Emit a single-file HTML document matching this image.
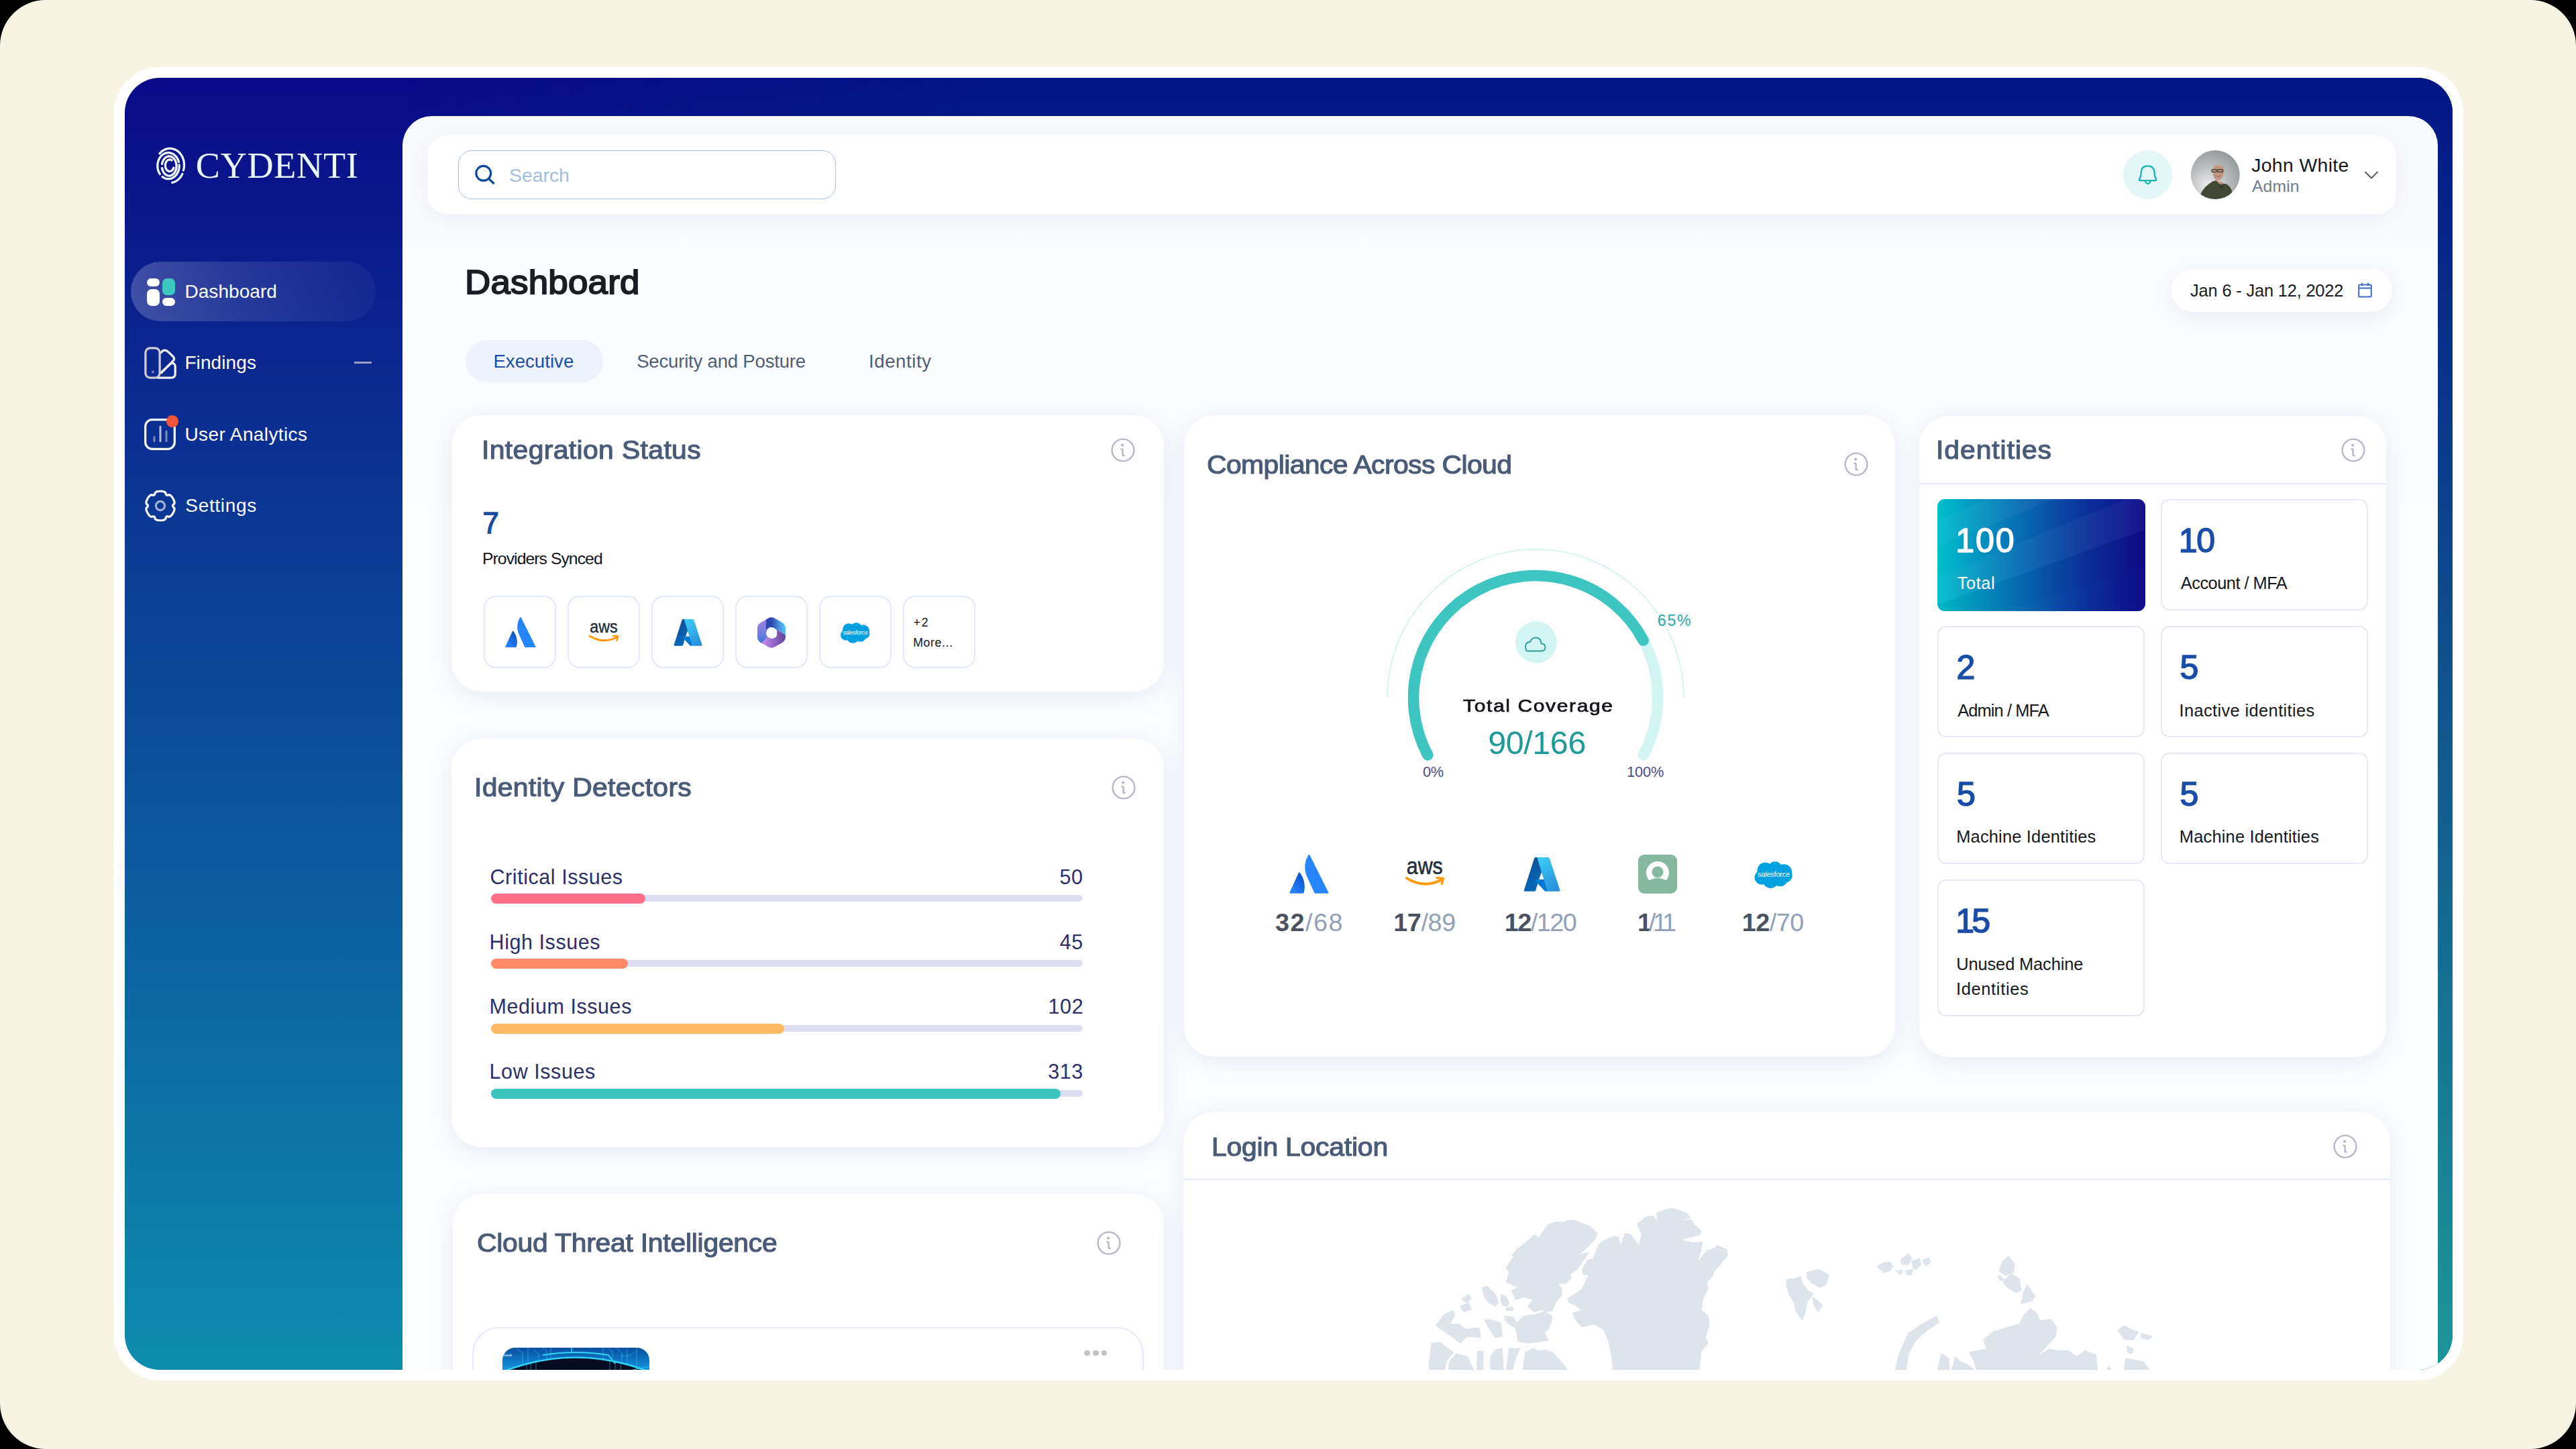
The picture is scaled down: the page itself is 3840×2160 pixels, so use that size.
<!DOCTYPE html><html><head><meta charset="utf-8"><title>Cydenti Dashboard</title><style>
html,body{margin:0;padding:0;width:3840px;height:2160px;overflow:hidden;background:#000}
*{box-sizing:border-box}
.a{position:absolute}
.t{position:absolute;white-space:nowrap;font-family:"Liberation Sans",sans-serif}
svg.a{overflow:visible}
</style></head><body>
<div class="a" style="left:0;top:0;width:3840px;height:2160px;border-radius:68px;background:#F7F4E3"></div>
<div class="a" style="left:170px;top:100px;width:3502px;height:1958px;border-radius:68px;background:#fff"></div>
<div class="a" style="left:186px;top:116px;width:3470px;height:1926px;border-radius:52px;overflow:hidden;background:linear-gradient(180deg,#0A0A88 0%,#0C4798 46%,#0D88AC 97%,#0E8CAC 100%)">
<div class="a" style="left:0;top:0;width:3470px;height:1926px;background:linear-gradient(180deg,#021586 0%,#10518E 46%,#167292 72%,#1B9398 97%,#1C9598 100%);-webkit-mask-image:linear-gradient(90deg,transparent 0px,transparent 420px,#000 1300px);mask-image:linear-gradient(90deg,transparent 0px,transparent 420px,#000 1300px)"></div>
<div class="a" style="left:-186px;top:-116px;width:3840px;height:2160px">
<svg class="a" style="left:226px;top:214px;" width="60" height="66" viewBox="0 0 60 66"><g fill="none" stroke="#EEF8FD" stroke-width="3.3" stroke-linecap="round" stroke-linejoin="round"><path d="M12.05 14.81 L13.08 13.65 L14.18 12.58 L15.33 11.60 L16.54 10.70 L17.80 9.91 L19.10 9.21 L20.44 8.62 L21.81 8.14 L23.21 7.76 L24.62 7.50 L26.05 7.34 L27.49 7.30 L28.92 7.37 L30.34 7.55 L31.75 7.85 L33.14 8.25 L34.51 8.77 L35.84 9.38 L37.13 10.10 L38.38 10.93 L39.57 11.84 L40.71 12.85 L41.79 13.95 L42.80 15.12 L43.75 16.38 L44.61 17.70 L45.40 19.09 L46.10 20.54 L46.72 22.04 L47.25 23.59 L47.69 25.17 L48.04 26.79 L48.29 28.42 L48.44 30.08 L48.50 31.74 L48.46 33.40 L48.32 35.06 L48.09 36.70 L47.77 38.32 L47.34 39.91 "/><path d="M12.41 45.47 L11.56 44.09 L10.82 42.62 L10.18 41.08 L9.66 39.48 L9.26 37.83 L8.99 36.15 L8.83 34.44 L8.80 32.72 L8.90 31.01 L9.13 29.31 L9.47 27.65 L9.94 26.02 L10.52 24.45 L11.22 22.95 L12.02 21.53 L12.92 20.20 L13.92 18.97 L15.00 17.85 L16.16 16.86 L17.39 15.98 L18.68 15.24 L20.02 14.64 L21.40 14.19 L22.80 13.88 L24.22 13.72 L25.65 13.72 L27.07 13.86 L28.48 14.15 L29.86 14.60 L31.20 15.18 L32.49 15.91 L33.73 16.77 L34.90 17.76 L35.99 18.87 L36.99 20.09 L37.90 21.41 L38.72 22.82 L39.42 24.32 L40.02 25.88 L40.49 27.50 "/><path d="M41.16 31.84 L41.20 32.92 L41.19 34.00 L41.12 35.08 L41.01 36.15 L40.85 37.21 L40.64 38.26 L40.39 39.30 L40.08 40.32 L39.73 41.31 L39.34 42.28 L38.90 43.22 L38.41 44.13 L37.89 45.01 L37.33 45.85 L36.73 46.65 L36.09 47.41 L35.42 48.13 L34.72 48.80 L33.98 49.43 L33.22 50.00 L32.44 50.52 L31.63 50.99 L30.80 51.41 L29.95 51.77 L29.09 52.07 L28.22 52.31 L27.33 52.50 L26.44 52.62 L25.54 52.69 L24.65 52.70 L23.75 52.64 L22.86 52.53 L21.97 52.36 L21.09 52.12 L20.23 51.84 L19.38 51.49 L18.55 51.09 L17.73 50.63 L16.94 50.12 L16.18 49.55 "/><path d="M45.92 45.25 L45.68 45.76 L45.42 46.26 L45.16 46.75 L44.89 47.24 L44.61 47.72 L44.32 48.19 L44.03 48.65 L43.72 49.10 L43.41 49.55 L43.09 49.99 L42.76 50.42 L42.42 50.84 L42.08 51.25 L41.73 51.65 L41.37 52.04 L41.00 52.42 L40.63 52.79 L40.25 53.15 L39.87 53.50 L39.48 53.84 L39.08 54.17 L38.68 54.49 L38.27 54.79 L37.85 55.09 L37.44 55.37 L37.01 55.64 L36.58 55.90 L36.15 56.15 L35.71 56.39 L35.27 56.61 L34.82 56.83 L34.37 57.03 L33.92 57.21 L33.46 57.39 L33.00 57.55 L32.54 57.70 L32.07 57.84 L31.60 57.96 L31.14 58.08 L30.66 58.17 "/><path d="M15.54 30.46 L15.98 28.41 L16.65 26.47 L17.52 24.67 L18.57 23.07 L19.79 21.69 L21.15 20.56 L22.62 19.71 L24.16 19.16 L25.74 18.91 L27.34 18.98 L28.91 19.36 L30.42 20.04 L31.85 21.01 L33.15 22.25 L34.30 23.73 L35.28 25.42 L36.06 27.28 L36.63 29.28 L36.98 31.37 L37.10 33.50 L36.98 35.63 L36.63 37.72 L36.06 39.72 L35.28 41.58 L34.30 43.27 L33.15 44.75 L31.85 45.99 L30.42 46.96 L28.91 47.64 L27.34 48.02 L25.74 48.09 L24.16 47.84 L22.62 47.29 L21.15 46.44 L19.79 45.31 L18.57 43.93 L17.52 42.33 L16.65 40.53 L15.98 38.59 L15.54 36.54 "/><path d="M32.88 36.14 L32.54 37.08 L32.11 37.97 L31.61 38.77 L31.03 39.49 L30.40 40.11 L29.72 40.63 L29.00 41.03 L28.25 41.31 L27.48 41.46 L26.70 41.50 L25.93 41.40 L25.16 41.18 L24.43 40.84 L23.72 40.38 L23.07 39.81 L22.47 39.14 L21.93 38.37 L21.46 37.52 L21.08 36.61 L20.77 35.64 L20.56 34.62 L20.43 33.58 L20.40 32.53 L20.46 31.48 L20.62 30.44 L20.86 29.44 L21.19 28.48 L21.61 27.59 L22.10 26.77 L22.66 26.03 L23.28 25.39 L23.95 24.86 L24.66 24.44 L25.41 24.13 L26.18 23.95 L26.96 23.90 L27.73 23.97 L28.50 24.17 L29.24 24.49 L29.95 24.93 "/></g></svg>
<div class="t" style="left:291.8px;top:220.2px;font-size:54.20px;line-height:54.20px;font-family:'Liberation Serif',serif;font-weight:400;color:#EAF6FC;letter-spacing:0.69px;">CYDENTI</div>
<div class="a" style="left:195px;top:390px;width:365px;height:89px;border-radius:44.5px;background:linear-gradient(90deg,rgba(255,255,255,0.21) 0%,rgba(255,255,255,0.11) 45%,rgba(255,255,255,0.035) 100%)"></div>
<div class="a" style="left:219px;top:415px;width:19px;height:12px;border-radius:6px;background:#fff"></div>
<div class="a" style="left:242px;top:415px;width:19px;height:25px;border-radius:7px;background:#3EC6C0"></div>
<div class="a" style="left:219px;top:431px;width:19px;height:25px;border-radius:7px;background:#fff"></div>
<div class="a" style="left:242px;top:444px;width:19px;height:12px;border-radius:6px;background:#fff"></div>
<div class="t" style="left:275.4px;top:421.0px;font-size:28.05px;line-height:28.05px;font-family:'Liberation Sans',sans-serif;font-weight:400;color:#fff;letter-spacing:0.04px;">Dashboard</div>
<svg class="a" style="left:215px;top:517px;" width="49" height="49" viewBox="0 0 49 49"><g fill="none" stroke-width="3.3" stroke-linejoin="round" stroke-linecap="round"><path d="M25.4 8.5 Q27 5.2 31 5.2 Q33.5 5.3 35.5 7.3 L43 14.5 Q46 17.7 43.3 20.7 L25.6 38.6" stroke="#EDEDF0"/><path d="M25 38.5 L38.8 25.7 Q42 23 44.8 25.6 Q46.2 27 46.2 29.5 V40 Q46.2 46.1 40 46.1 H20" stroke="#EDEDF0"/><rect x="1.9" y="1.9" width="21.2" height="44.2" rx="6.8" stroke="#CDCCD2"/></g><circle cx="12.8" cy="37.4" r="2.1" fill="#6F74B8"/></svg>
<div class="t" style="left:275.4px;top:527.2px;font-size:28.05px;line-height:28.05px;font-family:'Liberation Sans',sans-serif;font-weight:400;color:#fff;letter-spacing:0.08px;">Findings</div>
<div class="a" style="left:528px;top:539px;width:26px;height:2.5px;background:#9B9DC4"></div>
<svg class="a" style="left:215px;top:624px;" width="47" height="47" viewBox="0 0 47 47"><rect x="1.7" y="1.7" width="43.6" height="43.6" rx="10" fill="none" stroke="#fff" stroke-width="3.2"/><rect x="13.5" y="26" width="3" height="9" rx="1.5" fill="rgba(255,255,255,0.45)"/><rect x="22.5" y="10.5" width="3" height="24.5" rx="1.5" fill="rgba(255,255,255,0.7)"/><rect x="31.5" y="17.5" width="3" height="17.5" rx="1.5" fill="rgba(255,255,255,0.45)"/></svg>
<div class="a" style="left:248px;top:619px;width:17.6px;height:17.6px;border-radius:50%;background:#F2553A"></div>
<div class="t" style="left:275.5px;top:633.7px;font-size:28.05px;line-height:28.05px;font-family:'Liberation Sans',sans-serif;font-weight:400;color:#fff;letter-spacing:0.37px;">User Analytics</div>
<svg class="a" style="left:211px;top:726px;" width="56" height="56" viewBox="0 0 56 56"><path d="M29.87 6.25 L26.13 6.25 L23.25 6.68 L21.24 7.54 L20.09 8.82 L19.82 10.54 L19.20 11.67 L18.25 12.21 L16.97 12.18 L15.34 11.57 L13.66 11.91 L11.91 13.23 L10.10 15.51 L8.23 18.75 L7.16 21.45 L6.90 23.62 L7.44 25.26 L8.78 26.35 L9.46 27.45 L9.46 28.55 L8.78 29.65 L7.44 30.74 L6.90 32.38 L7.16 34.55 L8.23 37.25 L10.10 40.49 L11.91 42.77 L13.66 44.09 L15.34 44.43 L16.97 43.82 L18.25 43.79 L19.20 44.33 L19.82 45.46 L20.09 47.18 L21.24 48.46 L23.25 49.32 L26.13 49.75 L29.87 49.75 L32.75 49.32 L34.76 48.46 L35.91 47.18 L36.18 45.46 L36.80 44.33 L37.75 43.79 L39.03 43.82 L40.66 44.43 L42.34 44.09 L44.09 42.77 L45.90 40.49 L47.77 37.25 L48.84 34.55 L49.10 32.38 L48.56 30.74 L47.22 29.65 L46.54 28.55 L46.54 27.45 L47.22 26.35 L48.56 25.26 L49.10 23.62 L48.84 21.45 L47.77 18.75 L45.90 15.51 L44.09 13.23 L42.34 11.91 L40.66 11.57 L39.03 12.18 L37.75 12.21 L36.80 11.67 L36.18 10.54 L35.91 8.82 L34.76 7.54 L32.75 6.68Z" fill="none" stroke="#fff" stroke-width="3.2" stroke-linejoin="round"/><circle cx="28" cy="28" r="6.6" fill="none" stroke="rgba(255,255,255,0.62)" stroke-width="3.1"/></svg>
<div class="t" style="left:276.3px;top:740.2px;font-size:28.05px;line-height:28.05px;font-family:'Liberation Sans',sans-serif;font-weight:400;color:#fff;letter-spacing:0.65px;">Settings</div>
<div class="a" style="left:600px;top:173px;width:3034px;height:1900px;border-radius:44px 44px 0 0;background:linear-gradient(180deg,#F8F9FC 0px,#FBFCFE 300px,#FCFDFF 700px)"></div>
<div class="a" style="left:637px;top:202px;width:2935px;height:117px;border-radius:29px;background:#fff;box-shadow:0 8px 30px rgba(50,90,180,0.065)"></div>
<div class="a" style="left:683px;top:224px;width:563px;height:73px;border-radius:20px;border:1.6px solid #A9C0E2;background:#fff"></div>
<svg class="a" style="left:708px;top:246px;" width="31" height="31" viewBox="0 0 31 31"><circle cx="12.7" cy="12.3" r="10.9" fill="none" stroke="#0E4AA0" stroke-width="3.2"/><path d="M20.5 20.3 L28.6 28" stroke="#0E4AA0" stroke-width="3.2" stroke-linecap="butt"/></svg>
<div class="t" style="left:759.1px;top:246.6px;font-size:28.49px;line-height:28.49px;font-family:'Liberation Sans',sans-serif;font-weight:400;color:#A3BDE0;letter-spacing:-0.09px;">Search</div>
<div class="a" style="left:3165px;top:224px;width:73px;height:73px;border-radius:50%;background:#E4F6F7"></div>
<svg class="a" style="left:3185px;top:244px;" width="33" height="32" viewBox="0 0 33 32"><path d="M5 25.2 Q3.2 25 4.4 22.6 Q6.6 18.5 6.6 14.5 Q6.6 3.3 16.6 3.3 Q26.6 3.3 26.6 14.5 Q26.6 18.5 28.8 22.6 Q30 25 28.2 25.2 Z" fill="none" stroke="#18B3B5" stroke-width="2.3" stroke-linejoin="round"/><path d="M12.6 25.6 Q13.6 29.8 16.6 29.8 Q19.6 29.8 20.6 25.6" fill="none" stroke="#18B3B5" stroke-width="2.2"/></svg>
<svg class="a" style="left:3266px;top:224px;" width="73" height="73" viewBox="0 0 73 73"><defs><radialGradient id="avg" cx="0.35" cy="0.72" r="0.75"><stop offset="0" stop-color="#EDEDEE"/><stop offset="0.55" stop-color="#B9BCBE"/><stop offset="1" stop-color="#959A9C"/></radialGradient><clipPath id="avc"><circle cx="36.3" cy="36.5" r="36.4"/></clipPath></defs><g clip-path="url(#avc)"><rect width="73" height="73" fill="url(#avg)"/><path d="M35 44 L49 49 L47 58 Z" fill="#B98A73"/><ellipse cx="40.6" cy="32.5" rx="8.3" ry="12.4" fill="#C39680"/><path d="M32.3 30 Q31.5 19.5 40.5 19.2 Q49.5 19.5 49.3 30 Q48 24 46 23.5 Q40 21.5 34.5 24 Q33 26 32.3 30Z" fill="#B4B3AC"/><rect x="31" y="28.6" width="7.8" height="3.8" rx="1.4" fill="none" stroke="#3B3632" stroke-width="1.3"/><rect x="40" y="28.6" width="7.8" height="3.8" rx="1.4" fill="none" stroke="#3B3632" stroke-width="1.3"/><path d="M36 38 Q40.5 41 45 38" fill="none" stroke="#8C6A5A" stroke-width="1"/><path d="M14 66 Q19 54 33 46 L37 45.5 Q42 53 48.5 50 L52 50 Q58.5 53 60.8 60 L61.5 76 H12 Z" fill="#414934"/><path d="M37 45.5 L46 57 L49 50.5" fill="none" stroke="#2E3426" stroke-width="1.2"/></g></svg>
<div class="t" style="left:3356.2px;top:232.1px;font-size:28.34px;line-height:28.34px;font-family:'Liberation Sans',sans-serif;font-weight:400;color:#15171C;letter-spacing:0.38px;">John White</div>
<div class="t" style="left:3357.0px;top:266.0px;font-size:24.71px;line-height:24.71px;font-family:'Liberation Sans',sans-serif;font-weight:400;color:#6E7C8A;letter-spacing:0.14px;">Admin</div>
<svg class="a" style="left:3524px;top:254px;" width="22" height="14" viewBox="0 0 22 14"><path d="M1.5 2 L11 11.5 L20.5 2" fill="none" stroke="#555B63" stroke-width="2"/></svg>
<div class="t" style="left:692.5px;top:396.0px;font-size:50.00px;line-height:50.00px;font-family:'Liberation Sans',sans-serif;font-weight:400;color:#1A1D24;letter-spacing:0.14px;-webkit-text-stroke:1.9px #1A1D24;transform:scaleX(1.06);transform-origin:0 0;">Dashboard</div>
<div class="a" style="left:3237px;top:401px;width:329px;height:64px;border-radius:32px;background:#fff;box-shadow:0 8px 30px rgba(50,90,180,0.09)"></div>
<div class="t" style="left:3265.1px;top:420.5px;font-size:25.44px;line-height:25.44px;font-family:'Liberation Sans',sans-serif;font-weight:400;color:#1A1D24;letter-spacing:-0.19px;">Jan 6 - Jan 12, 2022</div>
<svg class="a" style="left:3515px;top:421px;" width="21" height="23" viewBox="0 0 21 23"><rect x="1.2" y="3.5" width="18.6" height="18" rx="1.5" fill="none" stroke="#3A6CC8" stroke-width="2"/><path d="M1.2 8.5 H19.8 M6 0.8 V5 M15 0.8 V5" stroke="#3A6CC8" stroke-width="2"/></svg>
<div class="a" style="left:693.5px;top:507px;width:205.5px;height:63px;border-radius:32px;background:#EDF2FC"></div>
<div class="t" style="left:735.4px;top:524.6px;font-size:27.62px;line-height:27.62px;font-family:'Liberation Sans',sans-serif;font-weight:400;color:#1F4FA8;letter-spacing:0.02px;">Executive</div>
<div class="t" style="left:949.2px;top:524.6px;font-size:27.62px;line-height:27.62px;font-family:'Liberation Sans',sans-serif;font-weight:400;color:#4F5E78;letter-spacing:-0.23px;">Security and Posture</div>
<div class="t" style="left:1295.1px;top:524.6px;font-size:27.62px;line-height:27.62px;font-family:'Liberation Sans',sans-serif;font-weight:400;color:#4F5E78;letter-spacing:0.55px;">Identity</div>
<div class="a" style="left:673px;top:619px;width:1062px;height:412px;border-radius:45px;background:#fff;box-shadow:0 6px 36px rgba(60,95,165,0.12)"></div>
<div class="t" style="left:717.9px;top:651.8px;font-size:38.59px;line-height:38.59px;font-family:'Liberation Sans',sans-serif;font-weight:400;color:#4A5B78;letter-spacing:0.34px;-webkit-text-stroke:1.15px #4A5B78;transform:scaleX(1.06);transform-origin:0 0;">Integration Status</div>
<svg class="a" style="left:1654.4px;top:650.7px;" width="40" height="40" viewBox="0 0 40 40"><circle cx="20" cy="20" r="16.4" fill="none" stroke="#B6BAC8" stroke-width="2.4"/><circle cx="19.1" cy="12.6" r="2.1" fill="#B6BAC8"/><path d="M17.6 18.6 Q19.6 18.6 19.6 20.5 V26.5 Q19.6 28.2 21.6 28.2" fill="none" stroke="#B6BAC8" stroke-width="2.5" stroke-linecap="round"/></svg>
<div class="t" style="left:719.5px;top:758.0px;font-size:43.75px;line-height:43.75px;font-family:'Liberation Sans',sans-serif;font-weight:400;color:#1A4DA0;letter-spacing:0.00px;-webkit-text-stroke:1.4px #1A4DA0;">7</div>
<div class="t" style="left:719.0px;top:821.1px;font-size:24.71px;line-height:24.71px;font-family:'Liberation Sans',sans-serif;font-weight:400;color:#111318;letter-spacing:-0.93px;">Providers Synced</div>
<div class="a" style="left:721px;top:888px;width:108px;height:108px;border-radius:18px;border:2px solid #E4E9FC;background:#fff"></div>
<div class="a" style="left:846px;top:888px;width:108px;height:108px;border-radius:18px;border:2px solid #E4E9FC;background:#fff"></div>
<div class="a" style="left:971px;top:888px;width:108px;height:108px;border-radius:18px;border:2px solid #E4E9FC;background:#fff"></div>
<div class="a" style="left:1096px;top:888px;width:108px;height:108px;border-radius:18px;border:2px solid #E4E9FC;background:#fff"></div>
<div class="a" style="left:1221px;top:888px;width:108px;height:108px;border-radius:18px;border:2px solid #E4E9FC;background:#fff"></div>
<div class="a" style="left:1346px;top:888px;width:108px;height:108px;border-radius:18px;border:2px solid #E4E9FC;background:#fff"></div>
<svg class="a" style="left:752.6px;top:919.8px;" width="46" height="46" viewBox="0 0 45 45"><defs><linearGradient id="atg752.6" x1="0.9" y1="0.1" x2="0.2" y2="0.9"><stop offset="0" stop-color="#0A4FC2"/><stop offset="1" stop-color="#2684FF"/></linearGradient></defs><path d="M12.3 20.7 Q11.3 19.5 10.5 20.8 L0.3 43 Q-0.2 44 1 44 H15.3 Q16.2 44 16.6 43 Q19.6 31 12.3 20.7Z" fill="url(#atg752.6)"/><path d="M21.5 0.6 Q15.5 11 19 22.5 L28.3 43 Q28.8 44 29.8 44 H44 Q45 44 44.5 43 L23.3 0.6 Q22.4 -0.6 21.5 0.6Z" fill="#2684FF"/></svg>
<svg class="a" style="left:878px;top:928px;" width="45" height="31" viewBox="0 0 44 30"><text x="1.2" y="14.7" font-family="Liberation Sans,sans-serif" font-size="26" fill="#232F3E" stroke="#232F3E" stroke-width="0.45" textLength="40.5" lengthAdjust="spacingAndGlyphs">aws</text><path d="M1.2 19.6 Q21 31.5 40.2 21.4" fill="none" stroke="#FF9900" stroke-width="2.9" stroke-linecap="round"/><path d="M35.2 19.2 L42.2 19.9 L40.6 26" fill="none" stroke="#FF9900" stroke-width="2.5" stroke-linecap="round" stroke-linejoin="round"/></svg>
<svg class="a" style="left:1004px;top:922.8px;" width="43" height="40" viewBox="0 0 42 39"><defs><linearGradient id="azA1004" x1="0" y1="0" x2="0.3" y2="1"><stop offset="0" stop-color="#114A8B"/><stop offset="1" stop-color="#0669BC"/></linearGradient><linearGradient id="azB1004" x1="0.2" y1="0" x2="0.6" y2="1"><stop offset="0" stop-color="#3CCBF4"/><stop offset="1" stop-color="#2892DF"/></linearGradient></defs><path d="M13.6 0 H16.6 L21.2 15.2 L17.8 24.6 L13.9 37.6 Q13.5 38.8 12.3 38.8 H1.6 Q0.2 38.8 0.6 37.5 L12.4 1 Q12.7 0 13.6 0Z" fill="url(#azA1004)"/><path d="M11.8 25.2 H24.2 L27.4 38.8 H25.4 Q24.6 38.8 24 38.2 Z" fill="#0078D4"/><path d="M15.4 0 H28.2 Q29.2 0 29.6 1 L41.6 37.5 Q42 38.8 40.6 38.8 H28.3 Q27.3 38.8 27 37.8 Z" fill="url(#azB1004)"/></svg>
<svg class="a" style="left:1129.4px;top:920px;" width="42" height="46" viewBox="0 0 40.5 44.8"><defs><clipPath id="mcl1129"><path d="M15.34 1.63 L15.34 1.63 Q20.25 -1.20 25.16 1.63 L35.78 7.77 Q40.69 10.60 40.69 16.26 L40.69 28.54 Q40.69 34.20 35.78 37.03 L25.16 43.17 Q20.25 46.00 15.34 43.17 L4.72 37.03 Q-0.19 34.20 -0.19 28.54 L-0.19 16.26 Q-0.19 10.60 4.72 7.77 Z"/></clipPath><linearGradient id="mL1129" x1="0" y1="0" x2="0" y2="1"><stop offset="0" stop-color="#B27DE4"/><stop offset="0.5" stop-color="#6E7FE0"/><stop offset="1" stop-color="#1668CE"/></linearGradient><linearGradient id="mT1129" x1="0" y1="0" x2="1" y2="0"><stop offset="0.25" stop-color="#2E48AE"/><stop offset="0.55" stop-color="#4A90DD"/><stop offset="1" stop-color="#52E6FA"/></linearGradient><linearGradient id="mB1129" x1="0" y1="0" x2="1" y2="0"><stop offset="0.1" stop-color="#D89BF5"/><stop offset="0.55" stop-color="#9466C8"/><stop offset="1" stop-color="#4E3888"/></linearGradient></defs><g clip-path="url(#mcl1129)"><path d="M20.25 22.4 L-4.5 49.8 L-5 -3 L12 -3 L12 26Z" fill="url(#mL1129)"/><path d="M12 26 L12 -3 L46 -3 L46 29.5 L28.8 18.2 L20.25 22.4Z" fill="url(#mT1129)"/><path d="M20.25 22.4 L28.8 18.2 L46 29.5 L46 51 L-4.5 51 L-4.5 49.8Z" fill="url(#mB1129)"/></g><path d="M12.65 23.4 Q12.25 17.4 17.25 15.099999999999998 Q20.25 13.799999999999999 23.75 15.599999999999998 L27.05 17.799999999999997 Q28.25 18.9 28.25 21.4 V25.4 Q28.05 28.9 24.75 30.2 Q20.25 32.0 16.25 29.7 Q12.65 27.4 12.65 23.4Z" fill="#fff"/></svg>
<svg class="a" style="left:1252px;top:927px;" width="46" height="32" viewBox="0 0 45 31"><g fill="#00A1E0"><circle cx="13" cy="11" r="9"/><circle cx="24" cy="9" r="8"/><circle cx="34" cy="13" r="9"/><circle cx="9" cy="19" r="8"/><circle cx="19" cy="22" r="9"/><circle cx="30" cy="21" r="8"/><circle cx="36" cy="17" r="7.5"/></g><text x="22.5" y="18.5" text-anchor="middle" font-family="Liberation Sans,sans-serif" font-size="8.4" fill="#fff" letter-spacing="-0.2">salesforce</text></svg>
<div class="t" style="left:1361.7px;top:920.0px;font-size:17.59px;line-height:17.59px;font-family:'Liberation Sans',sans-serif;font-weight:400;color:#111318;letter-spacing:1.91px;">+2</div>
<div class="t" style="left:1361.2px;top:949.8px;font-size:17.73px;line-height:17.73px;font-family:'Liberation Sans',sans-serif;font-weight:400;color:#111318;letter-spacing:0.63px;">More...</div>
<div class="a" style="left:673px;top:1101px;width:1062px;height:609px;border-radius:45px;background:#fff;box-shadow:0 6px 36px rgba(60,95,165,0.12)"></div>
<div class="t" style="left:706.9px;top:1154.6px;font-size:38.59px;line-height:38.59px;font-family:'Liberation Sans',sans-serif;font-weight:400;color:#4A5B78;letter-spacing:0.31px;-webkit-text-stroke:1.15px #4A5B78;transform:scaleX(1.06);transform-origin:0 0;">Identity Detectors</div>
<svg class="a" style="left:1655px;top:1153.6px;" width="40" height="40" viewBox="0 0 40 40"><circle cx="20" cy="20" r="16.4" fill="none" stroke="#B6BAC8" stroke-width="2.4"/><circle cx="19.1" cy="12.6" r="2.1" fill="#B6BAC8"/><path d="M17.6 18.6 Q19.6 18.6 19.6 20.5 V26.5 Q19.6 28.2 21.6 28.2" fill="none" stroke="#B6BAC8" stroke-width="2.5" stroke-linecap="round"/></svg>
<div class="t" style="left:730.5px;top:1291.8px;font-size:30.52px;line-height:30.52px;font-family:'Liberation Sans',sans-serif;font-weight:400;color:#2C2F6A;letter-spacing:0.55px;">Critical Issues</div>
<div class="t" style="left:1579.6px;top:1291.8px;font-size:30.52px;line-height:30.52px;font-family:'Liberation Sans',sans-serif;font-weight:400;color:#2C2F6A;letter-spacing:0.55px;">50</div>
<div class="a" style="left:732px;top:1334px;width:882px;height:10px;border-radius:5px;background:#DDDEF1"></div>
<div class="a" style="left:732px;top:1331.5px;width:229.70000000000005px;height:15px;border-radius:7.5px;background:#FF6F8A"></div>
<div class="t" style="left:729.6px;top:1389.0px;font-size:30.52px;line-height:30.52px;font-family:'Liberation Sans',sans-serif;font-weight:400;color:#2C2F6A;letter-spacing:0.55px;">High Issues</div>
<div class="t" style="left:1579.8px;top:1389.0px;font-size:30.52px;line-height:30.52px;font-family:'Liberation Sans',sans-serif;font-weight:400;color:#2C2F6A;letter-spacing:0.55px;">45</div>
<div class="a" style="left:732px;top:1431px;width:882px;height:10px;border-radius:5px;background:#DDDEF1"></div>
<div class="a" style="left:732px;top:1428.5px;width:204px;height:15px;border-radius:7.5px;background:#FF8B6A"></div>
<div class="t" style="left:729.6px;top:1484.9px;font-size:30.52px;line-height:30.52px;font-family:'Liberation Sans',sans-serif;font-weight:400;color:#2C2F6A;letter-spacing:0.55px;">Medium Issues</div>
<div class="t" style="left:1562.6px;top:1484.9px;font-size:30.52px;line-height:30.52px;font-family:'Liberation Sans',sans-serif;font-weight:400;color:#2C2F6A;letter-spacing:0.55px;">102</div>
<div class="a" style="left:732px;top:1528px;width:882px;height:10px;border-radius:5px;background:#DDDEF1"></div>
<div class="a" style="left:732px;top:1525.5px;width:437px;height:15px;border-radius:7.5px;background:#FFB864"></div>
<div class="t" style="left:729.6px;top:1582.0px;font-size:30.52px;line-height:30.52px;font-family:'Liberation Sans',sans-serif;font-weight:400;color:#2C2F6A;letter-spacing:0.55px;">Low Issues</div>
<div class="t" style="left:1562.3px;top:1582.0px;font-size:30.52px;line-height:30.52px;font-family:'Liberation Sans',sans-serif;font-weight:400;color:#2C2F6A;letter-spacing:0.55px;">313</div>
<div class="a" style="left:732px;top:1625px;width:882px;height:10px;border-radius:5px;background:#DDDEF1"></div>
<div class="a" style="left:732px;top:1622.5px;width:849px;height:15px;border-radius:7.5px;background:#3CC5BF"></div>
<div class="a" style="left:675px;top:1780px;width:1060px;height:500px;border-radius:45px;background:#fff;box-shadow:0 6px 36px rgba(60,95,165,0.12)"></div>
<div class="t" style="left:710.6px;top:1834.1px;font-size:38.59px;line-height:38.59px;font-family:'Liberation Sans',sans-serif;font-weight:400;color:#4A5B78;letter-spacing:-0.24px;-webkit-text-stroke:1.15px #4A5B78;transform:scaleX(1.06);transform-origin:0 0;">Cloud Threat Intelligence</div>
<svg class="a" style="left:1632.7px;top:1833px;" width="40" height="40" viewBox="0 0 40 40"><circle cx="20" cy="20" r="16.4" fill="none" stroke="#B6BAC8" stroke-width="2.4"/><circle cx="19.1" cy="12.6" r="2.1" fill="#B6BAC8"/><path d="M17.6 18.6 Q19.6 18.6 19.6 20.5 V26.5 Q19.6 28.2 21.6 28.2" fill="none" stroke="#B6BAC8" stroke-width="2.5" stroke-linecap="round"/></svg>
<div class="a" style="left:704px;top:1977.5px;width:1001px;height:200px;border-radius:40px;border:2px solid #E6EAFB;background:#fff"></div>
<div class="a" style="left:749px;top:2009.3px;width:219px;height:40px;border-radius:18.6px 18.6px 0 0;overflow:hidden"><svg class="a" style="left:0px;top:0px;" width="219" height="40" viewBox="0 0 219 40"><defs><linearGradient id="thg" x1="0" y1="0" x2="0" y2="1"><stop offset="0" stop-color="#0A4E9E"/><stop offset="0.5" stop-color="#0F78C8"/><stop offset="1" stop-color="#18A6E2"/></linearGradient></defs><rect width="219" height="40" fill="url(#thg)"/><g stroke="#3CCBF2" stroke-width="0.9" opacity="0.6" fill="none"><path d="M20 0 L30 8 V40 M38 0 V40 M46 2 L54 10 V30 M60 0 L66 6 V40 M72 0 V40 M150 0 V40 M158 0 L164 6 V40 M170 0 L178 8 V40 M186 0 V40 M200 0 V40 M176 12 H190 L196 6"/></g><path d="M0 36 Q109 -7 219 36 V40 H0Z" fill="#020B20"/><g stroke="#3CCBF2" stroke-width="0.8" opacity="0.7" fill="none"><path d="M36 40 V22 M42 40 V20 M50 40 V18 M160 40 V20 M168 40 V22 M176 40 V24"/></g><path d="M0 36 Q109 -7 219 36" fill="none" stroke="#2ED3F6" stroke-width="2.6"/><path d="M60 11 Q109 3 158 11 L168 24" fill="none" stroke="#2ED3F6" stroke-width="1.8"/><path d="M103 0 V7.5" stroke="#2ED3F6" stroke-width="1.5"/><path d="M180 36 L219 28" stroke="#2ED3F6" stroke-width="1.2" opacity="0.8"/><text x="1" y="13" font-family="Liberation Sans,sans-serif" font-size="5.5" fill="#fff">Geek</text></svg></div>
<div class="a" style="left:1616.3999999999999px;top:2012.8px;width:8.4px;height:8.4px;border-radius:50%;background:#C4C4C8"></div>
<div class="a" style="left:1629.3px;top:2012.8px;width:8.4px;height:8.4px;border-radius:50%;background:#C4C4C8"></div>
<div class="a" style="left:1641.8px;top:2012.8px;width:8.4px;height:8.4px;border-radius:50%;background:#C4C4C8"></div>
<div class="a" style="left:1765px;top:619px;width:1060px;height:956px;border-radius:45px;background:#fff;box-shadow:0 6px 36px rgba(60,95,165,0.12)"></div>
<div class="t" style="left:1798.6px;top:674.3px;font-size:38.59px;line-height:38.59px;font-family:'Liberation Sans',sans-serif;font-weight:400;color:#4A5B78;letter-spacing:-0.57px;-webkit-text-stroke:1.15px #4A5B78;transform:scaleX(1.06);transform-origin:0 0;">Compliance Across Cloud</div>
<svg class="a" style="left:2746.6px;top:671.8px;" width="40" height="40" viewBox="0 0 40 40"><circle cx="20" cy="20" r="16.4" fill="none" stroke="#B6BAC8" stroke-width="2.4"/><circle cx="19.1" cy="12.6" r="2.1" fill="#B6BAC8"/><path d="M17.6 18.6 Q19.6 18.6 19.6 20.5 V26.5 Q19.6 28.2 21.6 28.2" fill="none" stroke="#B6BAC8" stroke-width="2.5" stroke-linecap="round"/></svg>
<svg class="a" style="left:2040px;top:800px;" width="500" height="320" viewBox="0 0 500 320"><path d="M28.00 240.00 A221 221 0 0 1 470.00 240.00" fill="none" stroke="#CFF3F1" stroke-width="1.6"/><path d="M88.30 325.44 A182 182 0 1 1 409.70 325.44" fill="none" stroke="#D2F5F3" stroke-width="16.5" stroke-linecap="round"/><path d="M88.30 325.44 A182 182 0 0 1 409.70 154.56" fill="none" stroke="#3EC5C1" stroke-width="16.5" stroke-linecap="round"/><circle cx="249.9" cy="157.3" r="31" fill="#D3F5F3"/><path d="M237.5 170.5 H258 Q263.5 170.5 263.5 165 Q263.5 159.5 257.5 159.5 Q257 150.5 249 150.5 Q243 150.5 241 157 Q234 157 234 164 Q234 170.5 237.5 170.5Z" fill="none" stroke="#2A9E9C" stroke-width="1.8" stroke-linejoin="round"/></svg>
<div class="t" style="left:2180.6px;top:1039.2px;font-size:26.60px;line-height:26.60px;font-family:'Liberation Sans',sans-serif;font-weight:400;color:#111318;letter-spacing:1.42px;-webkit-text-stroke:0.7px #111318;transform:scaleX(1.13);transform-origin:0 0;">Total Coverage</div>
<div class="t" style="left:2218.2px;top:1082.8px;font-size:48.40px;line-height:48.40px;font-family:'Liberation Sans',sans-serif;font-weight:400;color:#1E9A98;letter-spacing:-0.38px;">90/166</div>
<div class="t" style="left:2120.9px;top:1140.2px;font-size:21.80px;line-height:21.80px;font-family:'Liberation Sans',sans-serif;font-weight:400;color:#4A4C88;letter-spacing:-0.27px;">0%</div>
<div class="t" style="left:2425.1px;top:1140.2px;font-size:21.80px;line-height:21.80px;font-family:'Liberation Sans',sans-serif;font-weight:400;color:#4A4C88;letter-spacing:-0.14px;">100%</div>
<div class="t" style="left:2470.8px;top:914.0px;font-size:23.26px;line-height:23.26px;font-family:'Liberation Sans',sans-serif;font-weight:400;color:#2BA8A6;letter-spacing:1.73px;">65%</div>
<svg class="a" style="left:1921.7px;top:1273.5px;" width="59" height="59" viewBox="0 0 45 45"><defs><linearGradient id="atg1921.7" x1="0.9" y1="0.1" x2="0.2" y2="0.9"><stop offset="0" stop-color="#0A4FC2"/><stop offset="1" stop-color="#2684FF"/></linearGradient></defs><path d="M12.3 20.7 Q11.3 19.5 10.5 20.8 L0.3 43 Q-0.2 44 1 44 H15.3 Q16.2 44 16.6 43 Q19.6 31 12.3 20.7Z" fill="url(#atg1921.7)"/><path d="M21.5 0.6 Q15.5 11 19 22.5 L28.3 43 Q28.8 44 29.8 44 H44 Q45 44 44.5 43 L23.3 0.6 Q22.4 -0.6 21.5 0.6Z" fill="#2684FF"/></svg>
<svg class="a" style="left:2095px;top:1283px;" width="59" height="40" viewBox="0 0 44 30"><text x="1.2" y="14.7" font-family="Liberation Sans,sans-serif" font-size="26" fill="#232F3E" stroke="#232F3E" stroke-width="0.45" textLength="40.5" lengthAdjust="spacingAndGlyphs">aws</text><path d="M1.2 19.6 Q21 31.5 40.2 21.4" fill="none" stroke="#FF9900" stroke-width="2.9" stroke-linecap="round"/><path d="M35.2 19.2 L42.2 19.9 L40.6 26" fill="none" stroke="#FF9900" stroke-width="2.5" stroke-linecap="round" stroke-linejoin="round"/></svg>
<svg class="a" style="left:2270.6px;top:1277.7px;" width="55" height="51" viewBox="0 0 42 39"><defs><linearGradient id="azA2270" x1="0" y1="0" x2="0.3" y2="1"><stop offset="0" stop-color="#114A8B"/><stop offset="1" stop-color="#0669BC"/></linearGradient><linearGradient id="azB2270" x1="0.2" y1="0" x2="0.6" y2="1"><stop offset="0" stop-color="#3CCBF4"/><stop offset="1" stop-color="#2892DF"/></linearGradient></defs><path d="M13.6 0 H16.6 L21.2 15.2 L17.8 24.6 L13.9 37.6 Q13.5 38.8 12.3 38.8 H1.6 Q0.2 38.8 0.6 37.5 L12.4 1 Q12.7 0 13.6 0Z" fill="url(#azA2270)"/><path d="M11.8 25.2 H24.2 L27.4 38.8 H25.4 Q24.6 38.8 24 38.2 Z" fill="#0078D4"/><path d="M15.4 0 H28.2 Q29.2 0 29.6 1 L41.6 37.5 Q42 38.8 40.6 38.8 H28.3 Q27.3 38.8 27 37.8 Z" fill="url(#azB2270)"/></svg>
<svg class="a" style="left:2441.5px;top:1273.5px;" width="58" height="58" viewBox="0 0 58 58"><rect width="58" height="58" rx="9" fill="#86B8A0"/><circle cx="29" cy="27" r="17" fill="#fff"/><circle cx="29" cy="26" r="8.5" fill="#86B8A0"/><path d="M14 40 Q29 30 44 40 L44 46 H14Z" fill="#86B8A0"/></svg>
<svg class="a" style="left:2614px;top:1282.6px;" width="60" height="41" viewBox="0 0 45 31"><g fill="#00A1E0"><circle cx="13" cy="11" r="9"/><circle cx="24" cy="9" r="8"/><circle cx="34" cy="13" r="9"/><circle cx="9" cy="19" r="8"/><circle cx="19" cy="22" r="9"/><circle cx="30" cy="21" r="8"/><circle cx="36" cy="17" r="7.5"/></g><text x="22.5" y="18.5" text-anchor="middle" font-family="Liberation Sans,sans-serif" font-size="8.4" fill="#fff" letter-spacing="-0.2">salesforce</text></svg>
<div class="t" style="left:1901.1px;top:1356.6px;font-size:37.79px;line-height:37.79px;letter-spacing:1.47px;font-family:'Liberation Sans',sans-serif"><span style="font-weight:700;color:#4A5260">32</span><span style="color:#93A1B6">/68</span></div>
<div class="t" style="left:2077.2px;top:1356.6px;font-size:37.79px;line-height:37.79px;letter-spacing:-0.37px;font-family:'Liberation Sans',sans-serif"><span style="font-weight:700;color:#4A5260">17</span><span style="color:#93A1B6">/89</span></div>
<div class="t" style="left:2242.7px;top:1356.6px;font-size:37.79px;line-height:37.79px;letter-spacing:-1.49px;font-family:'Liberation Sans',sans-serif"><span style="font-weight:700;color:#4A5260">12</span><span style="color:#93A1B6">/120</span></div>
<div class="t" style="left:2441.1px;top:1356.6px;font-size:37.79px;line-height:37.79px;letter-spacing:-4.31px;font-family:'Liberation Sans',sans-serif"><span style="font-weight:700;color:#4A5260">1</span><span style="color:#93A1B6">/11</span></div>
<div class="t" style="left:2596.7px;top:1356.6px;font-size:37.79px;line-height:37.79px;letter-spacing:-0.49px;font-family:'Liberation Sans',sans-serif"><span style="font-weight:700;color:#4A5260">12</span><span style="color:#93A1B6">/70</span></div>
<div class="a" style="left:2861px;top:620px;width:696px;height:956px;border-radius:45px;background:#fff;box-shadow:0 6px 36px rgba(60,95,165,0.12)"></div>
<div class="t" style="left:2886.4px;top:651.6px;font-size:38.59px;line-height:38.59px;font-family:'Liberation Sans',sans-serif;font-weight:400;color:#4A5B78;letter-spacing:0.88px;-webkit-text-stroke:1.15px #4A5B78;transform:scaleX(1.06);transform-origin:0 0;">Identities</div>
<svg class="a" style="left:3488.2px;top:650.7px;" width="40" height="40" viewBox="0 0 40 40"><circle cx="20" cy="20" r="16.4" fill="none" stroke="#B6BAC8" stroke-width="2.4"/><circle cx="19.1" cy="12.6" r="2.1" fill="#B6BAC8"/><path d="M17.6 18.6 Q19.6 18.6 19.6 20.5 V26.5 Q19.6 28.2 21.6 28.2" fill="none" stroke="#B6BAC8" stroke-width="2.5" stroke-linecap="round"/></svg>
<div class="a" style="left:2861px;top:719.5px;width:696px;height:2px;background:#E6EBF6"></div>
<div class="a" style="left:2888.4px;top:743.5px;width:309.6px;height:167px;border-radius:11px;background:linear-gradient(90deg,#00C0CC 0%,#02A2C6 13%,#0680BA 30%,#0858AC 50%,#0B309A 72%,#0E0A88 100%)"></div>
<svg class="a" style="left:2888.4px;top:743.5px;border-radius:11px;overflow:hidden" width="309.6" height="167" viewBox="0 0 309.6 167"><path d="M0 33 L71 0 H175 L0 71Z" fill="rgba(255,255,255,0.045)"/><path d="M0 116 L309 -12 V46 L0 157Z" fill="rgba(255,255,255,0.04)"/><path d="M0 157 L309 46 V100 L0 200Z" fill="rgba(0,0,40,0.03)"/></svg>
<div class="t" style="left:2915.2px;top:780.7px;font-size:50.15px;line-height:50.15px;font-family:'Liberation Sans',sans-serif;font-weight:400;color:#fff;letter-spacing:1.91px;-webkit-text-stroke:1.5px #fff;">100</div>
<div class="t" style="left:2917.7px;top:857.3px;font-size:25.44px;line-height:25.44px;font-family:'Liberation Sans',sans-serif;font-weight:400;color:#fff;letter-spacing:0.57px;">Total</div>
<div class="a" style="left:3221px;top:743.5px;width:309px;height:166px;border-radius:13px;border:2px solid #E5E9F5;background:#fff"></div>
<div class="t" style="left:3247.8px;top:780.7px;font-size:50.15px;line-height:50.15px;font-family:'Liberation Sans',sans-serif;font-weight:400;color:#1A4DA8;letter-spacing:-1.45px;-webkit-text-stroke:1.5px #1A4DA8;">10</div>
<div class="t" style="left:3250.8px;top:857.3px;font-size:25.44px;line-height:25.44px;font-family:'Liberation Sans',sans-serif;font-weight:400;color:#16181D;letter-spacing:-0.54px;">Account / MFA</div>
<div class="a" style="left:2888.4px;top:933px;width:309px;height:166px;border-radius:13px;border:2px solid #E5E9F5;background:#fff"></div>
<div class="t" style="left:2916.4px;top:970.2px;font-size:50.15px;line-height:50.15px;font-family:'Liberation Sans',sans-serif;font-weight:400;color:#1A4DA8;letter-spacing:0.00px;-webkit-text-stroke:1.5px #1A4DA8;">2</div>
<div class="t" style="left:2918.2px;top:1046.8px;font-size:25.44px;line-height:25.44px;font-family:'Liberation Sans',sans-serif;font-weight:400;color:#16181D;letter-spacing:-0.90px;">Admin / MFA</div>
<div class="a" style="left:3221px;top:933px;width:309px;height:166px;border-radius:13px;border:2px solid #E5E9F5;background:#fff"></div>
<div class="t" style="left:3249.5px;top:970.2px;font-size:50.15px;line-height:50.15px;font-family:'Liberation Sans',sans-serif;font-weight:400;color:#1A4DA8;letter-spacing:0.00px;-webkit-text-stroke:1.5px #1A4DA8;">5</div>
<div class="t" style="left:3248.5px;top:1046.8px;font-size:25.44px;line-height:25.44px;font-family:'Liberation Sans',sans-serif;font-weight:400;color:#16181D;letter-spacing:0.37px;">Inactive identities</div>
<div class="a" style="left:2888.4px;top:1121.5px;width:309px;height:166px;border-radius:13px;border:2px solid #E5E9F5;background:#fff"></div>
<div class="t" style="left:2916.9px;top:1158.7px;font-size:50.15px;line-height:50.15px;font-family:'Liberation Sans',sans-serif;font-weight:400;color:#1A4DA8;letter-spacing:0.00px;-webkit-text-stroke:1.5px #1A4DA8;">5</div>
<div class="t" style="left:2916.2px;top:1235.3px;font-size:25.44px;line-height:25.44px;font-family:'Liberation Sans',sans-serif;font-weight:400;color:#16181D;letter-spacing:0.18px;">Machine Identities</div>
<div class="a" style="left:3221px;top:1121.5px;width:309px;height:166px;border-radius:13px;border:2px solid #E5E9F5;background:#fff"></div>
<div class="t" style="left:3249.5px;top:1158.7px;font-size:50.15px;line-height:50.15px;font-family:'Liberation Sans',sans-serif;font-weight:400;color:#1A4DA8;letter-spacing:0.00px;-webkit-text-stroke:1.5px #1A4DA8;">5</div>
<div class="t" style="left:3248.8px;top:1235.3px;font-size:25.44px;line-height:25.44px;font-family:'Liberation Sans',sans-serif;font-weight:400;color:#16181D;letter-spacing:0.18px;">Machine Identities</div>
<div class="a" style="left:2888.4px;top:1311px;width:309px;height:204px;border-radius:13px;border:2px solid #E5E9F5;background:#fff"></div>
<div class="t" style="left:2915.2px;top:1348.2px;font-size:50.15px;line-height:50.15px;font-family:'Liberation Sans',sans-serif;font-weight:400;color:#1A4DA8;letter-spacing:-3.79px;-webkit-text-stroke:1.5px #1A4DA8;">15</div>
<div class="t" style="left:2916.3px;top:1424.8px;font-size:25.44px;line-height:25.44px;font-family:'Liberation Sans',sans-serif;font-weight:400;color:#16181D;letter-spacing:-0.14px;">Unused Machine</div>
<div class="t" style="left:2915.9px;top:1461.8px;font-size:25.44px;line-height:25.44px;font-family:'Liberation Sans',sans-serif;font-weight:400;color:#16181D;letter-spacing:0.68px;">Identities</div>
<div class="a" style="left:1764px;top:1658px;width:1799px;height:600px;border-radius:45px;background:#fff;box-shadow:0 6px 36px rgba(60,95,165,0.12)"></div>
<div class="t" style="left:1806.3px;top:1691.3px;font-size:38.59px;line-height:38.59px;font-family:'Liberation Sans',sans-serif;font-weight:400;color:#4A5B78;letter-spacing:-0.21px;-webkit-text-stroke:1.15px #4A5B78;transform:scaleX(1.06);transform-origin:0 0;">Login Location</div>
<svg class="a" style="left:3475.7px;top:1689px;" width="40" height="40" viewBox="0 0 40 40"><circle cx="20" cy="20" r="16.4" fill="none" stroke="#B6BAC8" stroke-width="2.4"/><circle cx="19.1" cy="12.6" r="2.1" fill="#B6BAC8"/><path d="M17.6 18.6 Q19.6 18.6 19.6 20.5 V26.5 Q19.6 28.2 21.6 28.2" fill="none" stroke="#B6BAC8" stroke-width="2.5" stroke-linecap="round"/></svg>
<div class="a" style="left:1764px;top:1757px;width:1799px;height:2px;background:#E6EBF6"></div>
<svg class="a" style="left:2100px;top:1780px;" width="1140" height="280" viewBox="0 0 1140 280"><g fill="#DEE4EB" stroke="#DEE4EB" stroke-width="1.2" stroke-linejoin="round"><path d="M237.2 155.4 L246.3 149.4 L258.4 142.3 L262.4 133.2 L268.5 121.1 L260.4 119.1 L258.4 113.0 L266.5 98.9 L274.5 96.9 L282.6 76.7 L288.7 70.6 L306.8 62.6 L312.9 64.6 L314.9 78.7 L323.0 58.5 L331.0 60.6 L343.2 76.7 L347.2 60.6 L341.1 44.4 L353.2 34.3 L363.3 32.3 L371.4 41.4 L369.4 28.3 L379.5 24.2 L393.6 21.2 L413.8 28.3 L419.9 35.3 L397.7 40.4 L421.9 38.4 L425.9 46.4 L436.0 54.5 L434.0 60.6 L405.7 67.6 L413.8 70.6 L423.9 72.7 L438.0 71.7 L436.0 80.7 L430.0 102.9 L444.1 84.8 L456.2 80.7 L460.2 76.7 L474.4 82.8 L475.4 90.8 L464.3 105.0 L456.2 113.0 L452.2 123.1 L444.1 131.2 L446.1 141.3 L438.0 157.4 L436.0 173.6 L446.1 181.7 L448.1 193.8 L442.1 214.0 L446.1 222.0 L436.0 234.2 L434.0 252.3 L432.0 266.5 L304.8 266.5 L302.8 242.2 L298.7 222.0 L290.7 201.9 L276.5 193.8 L258.4 197.8 L250.3 189.7 L244.2 177.6 L258.4 173.6 L248.3 165.5 L238.2 161.5Z"/><path d="M163.5 80.7 L171.6 74.7 L187.7 60.6 L193.8 66.6 L199.8 56.5 L207.9 45.4 L220.0 41.4 L230.1 42.4 L236.2 39.4 L246.3 39.4 L258.4 43.4 L270.5 48.4 L280.6 58.5 L278.6 66.6 L266.5 78.7 L252.3 90.8 L268.5 86.8 L250.3 113.0 L240.2 119.1 L242.2 125.2 L234.2 133.2 L222.0 133.2 L228.1 141.3 L228.1 151.4 L220.0 159.5 L214.0 173.6 L201.9 175.6 L199.8 171.6 L187.7 175.6 L177.6 167.5 L185.7 157.4 L171.6 153.4 L159.5 157.4 L153.4 143.3 L163.5 139.3 L145.3 131.2 L149.4 117.1 L145.3 109.0 L157.4 91.8 L153.4 90.8Z"/><path d="M109.0 139.3 L117.1 137.3 L129.2 149.4 L133.2 161.5 L129.2 167.5 L119.1 161.5 L113.0 153.4 L111.0 145.3Z"/><path d="M137.3 149.4 L145.3 153.4 L149.4 161.5 L147.4 167.5 L139.3 165.5 L137.3 157.4Z"/><path d="M78.7 157.4 L88.8 149.4 L92.9 155.4 L86.8 161.5Z"/><path d="M76.7 167.5 L88.8 161.5 L92.9 171.6 L82.8 175.6Z"/><path d="M40.4 195.8 L52.5 179.7 L66.6 173.6 L68.6 181.7 L60.6 193.8 L74.7 193.8 L84.8 201.9 L96.9 199.8 L105.0 199.8 L107.0 214.0 L86.8 211.9 L76.7 222.0 L66.6 214.0 L54.5 205.9Z"/><path d="M113.0 187.7 L123.1 187.7 L137.3 191.8 L139.3 211.9 L129.2 214.0 L121.1 201.9Z"/><path d="M143.3 181.7 L155.4 183.7 L161.5 191.8 L171.6 181.7 L187.7 179.7 L201.9 175.6 L214.0 181.7 L211.9 191.8 L207.9 201.9 L201.9 205.9 L207.9 218.0 L195.8 220.0 L177.6 222.0 L163.5 220.0 L159.5 199.8 L149.4 193.8 L143.3 187.7Z"/><path d="M145.3 169.6 L155.4 168.6 L155.4 173.6 L145.3 173.6Z"/><path d="M30.3 254.3 L34.3 222.0 L46.4 221.0 L66.6 236.2 L56.5 248.3 L52.5 266.5 L30.3 266.5Z"/><path d="M58.5 266.5 L60.6 250.3 L70.6 238.2 L86.8 242.2 L92.9 254.3 L98.9 266.5Z"/><path d="M100.9 266.5 L102.9 234.2 L111.0 234.2 L111.0 266.5Z"/><path d="M121.1 244.2 L129.2 232.1 L139.3 230.1 L141.3 266.5 L123.1 266.5Z"/><path d="M145.3 266.5 L149.4 230.1 L165.5 230.1 L159.5 244.2 L153.4 266.5Z"/><path d="M169.6 266.5 L173.6 236.2 L185.7 230.1 L193.8 234.2 L203.9 232.1 L214.0 236.2 L224.1 246.3 L240.2 266.5Z"/><path d="M563.3 127.3 L574.9 126.2 L584.3 122.7 L586.6 133.2 L595.9 144.8 L602.9 148.3 L593.6 161.1 L590.1 179.8 L586.6 187.9 L577.3 175.1 L574.9 161.1 L568.0 151.8 L563.3 137.8Z"/><path d="M593.6 116.9 L609.9 112.2 L620.4 116.9 L626.2 121.5 L621.5 135.5 L612.2 139.0 L600.6 132.0 L593.6 123.9Z"/><path d="M601.7 154.1 L609.9 158.8 L616.9 166.9 L609.9 175.1 L604.1 165.8Z"/><path d="M698.4 107.5 L707.7 102.9 L717.0 101.0 L721.7 107.5 L717.0 114.5 L707.7 116.9Z"/><path d="M733.3 98.2 L745.0 88.9 L749.6 95.9 L745.0 105.2 L735.7 105.2Z"/><path d="M749.6 100.6 L761.3 95.9 L763.6 105.2 L756.6 112.2 L752.0 109.9Z"/><path d="M765.9 98.2 L775.3 94.7 L777.6 101.7 L770.6 107.5Z"/><path d="M726.3 114.5 L735.7 113.4 L733.3 120.4Z"/><path d="M740.3 114.5 L752.0 112.2 L749.6 120.4 L742.6 120.4Z"/><path d="M894.0 92.4 L903.4 105.2 L901.0 116.9 L889.4 121.5 L880.1 114.5 L884.7 100.6Z"/><path d="M887.1 128.5 L898.7 119.2 L910.3 126.2 L912.7 142.5 L905.7 147.1 L894.0 140.2 L887.1 133.2Z"/><path d="M877.7 121.5 L884.7 123.9 L887.1 128.5 L881.2 128.5Z"/><path d="M922.0 135.5 L933.6 151.8 L929.0 158.8 L912.7 163.4 L917.3 144.8Z"/><path d="M786.9 182.1 L790.4 191.4 L772.9 203.0 L756.6 217.0 L745.0 238.0 L740.3 267.1 L724.0 267.1 L731.0 238.0 L745.0 207.7 L761.3 196.1 L779.9 185.6Z"/><path d="M835.8 235.7 L861.4 231.0 L856.8 217.0 L870.7 205.4 L894.0 198.4 L910.3 193.7 L917.3 179.8 L926.6 170.4 L936.0 177.4 L940.6 189.1 L956.9 186.7 L966.2 198.4 L963.9 212.4 L936.0 242.6 L954.6 231.0 L966.2 233.3 L982.6 233.3 L996.5 242.6 L1008.2 233.3 L1024.5 240.3 L1026.8 267.1 L847.5 267.1 L842.8 249.6Z"/><path d="M786.9 267.1 L793.9 238.0 L805.5 245.0 L805.5 267.1Z"/><path d="M807.9 267.1 L814.8 242.6 L821.8 249.6 L833.5 254.3 L847.5 267.1Z"/><path d="M1057.1 203.0 L1066.4 196.1 L1075.7 200.7 L1087.4 205.4 L1080.4 217.0 L1066.4 217.0Z"/><path d="M1092.0 207.7 L1108.3 212.4 L1101.3 217.0 L1092.0 214.7Z"/><path d="M1071.1 226.3 L1080.4 231.0 L1078.0 238.0 L1071.1 235.7Z"/><path d="M1066.4 267.1 L1068.7 245.0 L1094.4 249.6 L1108.3 267.1Z"/><path d="M1038.5 267.1 L1043.1 256.6 L1052.4 267.1Z"/></g></svg>
</div></div></body></html>
